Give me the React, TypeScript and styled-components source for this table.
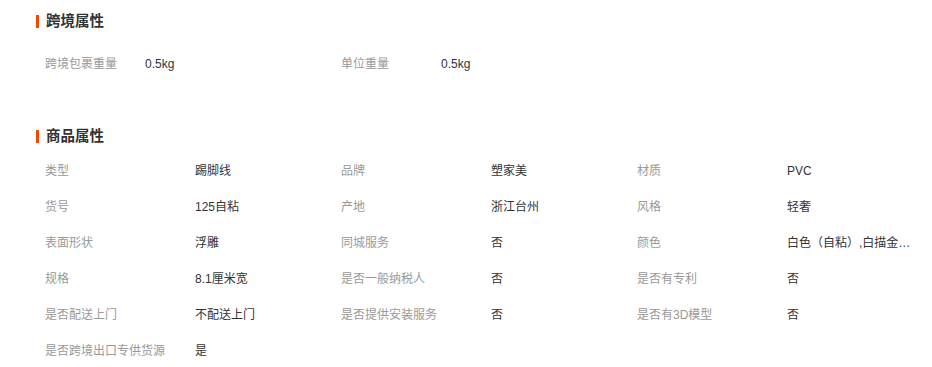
import React from "react";
import styled, { createGlobalStyle } from "styled-components";

const GlobalStyle = createGlobalStyle`
  html, body { margin: 0; padding: 0; background: #fff; }
  body { font-family: "Liberation Sans", "Noto Sans CJK SC", sans-serif; font-size: 12px; color: #333; }
`;

const Page = styled.div`
  width: 932px;
  padding: 11px 0 0 36px;
  box-sizing: border-box;
`;

const Section = styled.section<{ $gap: number }>`
  display: flex;
  flex-direction: column;
  margin-bottom: ${(p) => p.$gap}px;
`;

const Title = styled.h3<{ $after: number }>`
  display: flex;
  align-items: center;
  gap: 7px;
  margin: 0 0 ${(p) => p.$after}px 0;
  height: 20px;
  font-size: 14.5px;
  font-weight: bold;
  color: #333;
  line-height: 20px;
  &::before {
    content: "";
    width: 3px;
    height: 13px;
    background: #ff4400;
  }
`;

const Grid = styled.div`
  display: grid;
  grid-template-columns: repeat(3, 296px);
  padding-left: 9px;
`;

const Cell = styled.div<{ $labelW: number }>`
  display: grid;
  grid-template-columns: ${(p) => p.$labelW}px 126px;
  height: 36px;
  line-height: 36px;
  font-size: 12px;
`;

const Label = styled.span`
  color: #999;
  white-space: nowrap;
`;

const Value = styled.span`
  color: #333;
  white-space: nowrap;
  overflow: hidden;
  text-overflow: ellipsis;
`;

const cross = [
  ["跨境包裹重量", "0.5kg"],
  ["单位重量", "0.5kg"],
];

const attrs = [
  ["类型", "踢脚线"],
  ["品牌", "塑家美"],
  ["材质", "PVC"],
  ["货号", "125自粘"],
  ["产地", "浙江台州"],
  ["风格", "轻奢"],
  ["表面形状", "浮雕"],
  ["同城服务", "否"],
  ["颜色", "白色（自粘）,白描金（自粘）"],
  ["规格", "8.1厘米宽"],
  ["是否一般纳税人", "否"],
  ["是否有专利", "否"],
  ["是否配送上门", "不配送上门"],
  ["是否提供安装服务", "否"],
  ["是否有3D模型", "否"],
  ["是否跨境出口专供货源", "是"],
];

export default function App() {
  return (
    <Page>
      <GlobalStyle />
      <Section $gap={44}>
        <Title $after={15}>跨境属性</Title>
        <Grid>
          {cross.map(([l, v]) => (
            <Cell key={l} $labelW={100}>
              <Label>{l}</Label>
              <Value>{v}</Value>
            </Cell>
          ))}
        </Grid>
      </Section>
      <Section $gap={0}>
        <Title $after={7}>商品属性</Title>
        <Grid>
          {attrs.map(([l, v]) => (
            <Cell key={l} $labelW={150}>
              <Label>{l}</Label>
              <Value title={v}>{v}</Value>
            </Cell>
          ))}
        </Grid>
      </Section>
    </Page>
  );
}
